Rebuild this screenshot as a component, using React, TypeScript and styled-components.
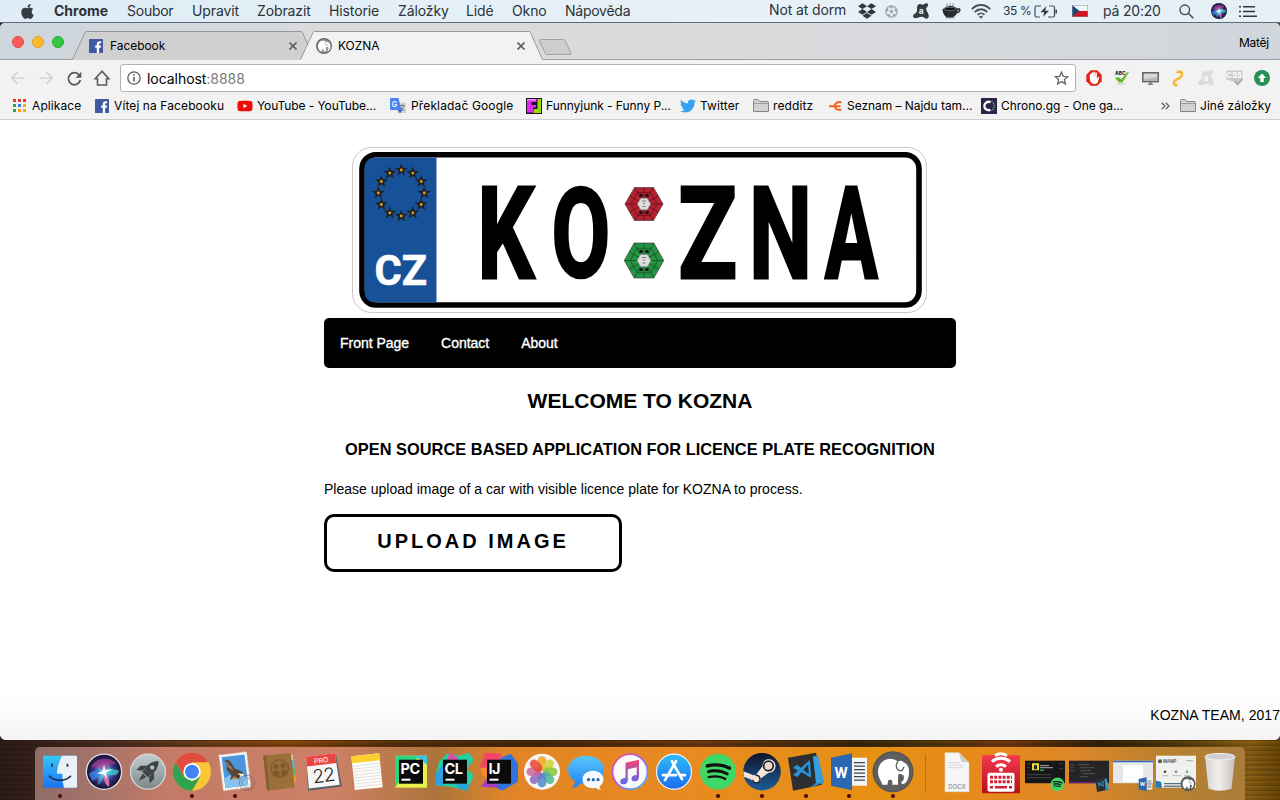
import React from "react";
import styled, { createGlobalStyle } from "styled-components";
import {
  FaApple,
  FaDropbox,
  FaSpotify,
  FaTwitter,
  FaFutbol,
  FaYoutube,
} from "react-icons/fa";

const ui = '"Inter", "Liberation Sans", sans-serif';

const GlobalStyle = createGlobalStyle`
  * { box-sizing: border-box; }
  html, body { margin: 0; padding: 0; overflow: hidden; }
  svg { display: block; flex: none; overflow: visible; }
`;

const Desktop = styled.div`
  width: 1280px;
  height: 800px;
  display: flex;
  flex-direction: column;
  overflow: hidden;
  background:
    repeating-linear-gradient(180deg, rgba(0, 0, 0, 0.2) 0 1px, rgba(0, 0, 0, 0) 1px 3px, rgba(0, 0, 0, 0.1) 3px 5px),
    linear-gradient(90deg, #2d1c17 0, #4a2c20 110px, #6b3d16 210px, #87450d 290px, #55300b 400px, #472708 540px, #6b370f 700px, #3b2608 860px, #50370d 930px, #70360b 1010px, #302208 1100px, #5a3f0b 1190px, #8a5f12 1250px, #6a4609 1280px);
`;

const MenuBar = styled.header`
  height: 23px;
  flex: none;
  display: flex;
  align-items: center;
  background: linear-gradient(90deg, #dfecf5, #e8f1f8 60%, #e4eff6);
  border-bottom: 1px solid #5c6a7c;
  font-family: ${ui};
  color: #2b3238;
`;

const MenuItem = styled.span<{ w: number; bold?: boolean; ls?: number; size?: number; indent?: number; lift?: number }>`
  width: ${(p) => p.w}px;
  flex: none;
  padding-left: ${(p) => p.indent ?? 0}px;
  padding-bottom: ${(p) => p.lift ?? 0}px;
  white-space: nowrap;
  font-size: ${(p) => p.size ?? 14}px;
  line-height: 20px;
  font-weight: ${(p) => (p.bold ? 700 : 400)};
  letter-spacing: ${(p) => p.ls ?? -0.12}px;
`;

const IconCell = styled.span<{ w: number; color?: string }>`
  width: ${(p) => p.w}px;
  flex: none;
  display: flex;
  justify-content: center;
  align-items: center;
  color: ${(p) => p.color ?? "#2f363c"};
`;

const Spacer = styled.span`
  flex: 1;
`;

const Window = styled.section`
  height: 717px;
  flex: none;
  display: flex;
  flex-direction: column;
  overflow: hidden;
  border-radius: 5px 5px 6px 6px;
  background: #fff;
  font-family: ${ui};
`;

const TabStrip = styled.div`
  height: 37px;
  flex: none;
  display: flex;
  align-items: flex-end;
  background: linear-gradient(90deg, #cdd5dd, #d8dadc 300px, #dadbdd 800px, #d0d6dc);
  box-shadow: inset 0 -1px #9b9ea1;
`;

const Lights = styled.div`
  width: 72px;
  height: 37px;
  display: flex;
  gap: 8px;
  padding: 13px 0 0 12px;
`;

const Light = styled.i<{ fill: string; edge: string }>`
  width: 12px;
  height: 12px;
  border-radius: 50%;
  background: ${(p) => p.fill};
  border: 1px solid ${(p) => p.edge};
`;

const TabBox = styled.div<{ active?: boolean }>`
  position: relative;
  z-index: ${(p) => (p.active ? 2 : 1)};
  width: 243px;
  height: 29px;
  margin-left: ${(p) => (p.active ? -15 : 0)}px;
  display: flex;
  align-items: center;
  padding: 0 16px 0 16px;
`;

const TabShape = styled.svg`
  position: absolute;
  left: 0;
  top: 0;
  z-index: -1;
`;

const TabTitle = styled.span`
  flex: 1;
  padding-left: 6px;
  font-size: 12px;
  letter-spacing: -0.05px;
  color: #000;
`;

const NewTab = styled.svg`
  margin: 0 0 5px -4px;
`;

const Profile = styled.span`
  padding: 0 11px 10px 0;
  font-size: 12px;
  line-height: 14px;
  letter-spacing: -0.25px;
`;

const Toolbar = styled.div`
  height: 34px;
  flex: none;
  display: flex;
  align-items: center;
  padding: 2px 4px 0;
  background: #f2f2f2;
`;

const AddressBar = styled.div`
  width: 956px;
  height: 28px;
  margin: 0 4px;
  display: flex;
  align-items: center;
  padding: 0 6px 0 6px;
  background: #fff;
  border: 1px solid #b3b3b3;
  border-radius: 3px;
  font-size: 14px;
`;

const Url = styled.span`
  flex: 1;
  padding-left: 6px;
  letter-spacing: -0.05px;
  i {
    font-style: normal;
    color: #7c7c7c;
  }
`;

const Bookmarks = styled.nav`
  height: 26px;
  flex: none;
  display: flex;
  align-items: center;
  padding: 0 0 2px 12px;
  background: #f2f2f2;
  border-bottom: 1px solid #cfcfcf;
`;

const Bookmark = styled.span<{ w: number; ls?: number; gap?: number }>`
  width: ${(p) => p.w}px;
  flex: none;
  display: flex;
  align-items: center;
  gap: ${(p) => p.gap ?? 4}px;
  white-space: nowrap;
  font-size: 12px;
  line-height: 16px;
  letter-spacing: ${(p) => p.ls ?? 0}px;
  color: #000;
`;

const Page = styled.main`
  flex: 1;
  display: flex;
  flex-direction: column;
  align-items: center;
  justify-content: space-between;
  font-family: "Liberation Sans", Arial, sans-serif;
  color: #000;
  background: linear-gradient(180deg, #fff 575px, #f4f4f4 620px);
`;

const Column = styled.div`
  width: 632px;
  padding-top: 27px;
  display: flex;
  flex-direction: column;
`;

const Plate = styled.svg`
  margin-left: 28px;
`;

const SiteNav = styled.nav`
  height: 50px;
  margin-top: 5px;
  display: flex;
  align-items: center;
  gap: 32px;
  padding: 0 16px;
  border-radius: 5px;
  background: #000;
`;

const NavLink = styled.a`
  color: #fff;
  font-size: 14px;
  letter-spacing: -0.02px;
  -webkit-text-stroke: 0.35px #fff;
`;

const Title = styled.h2`
  margin: 21px 0 0;
  font-size: 21px;
  line-height: 24px;
  text-align: center;
`;

const Subtitle = styled.h3`
  margin: 26px 0 0;
  font-size: 16.38px;
  line-height: 20px;
  letter-spacing: 0.02px;
  text-align: center;
  white-space: nowrap;
`;

const Lead = styled.p`
  margin: 22px 0 0;
  font-size: 14px;
  line-height: 16px;
`;

const UploadButton = styled.button`
  width: 298px;
  height: 58px;
  margin-top: 17px;
  padding: 0 0 3px;
  border: 3px solid #000;
  border-radius: 10px;
  background: #fff;
  color: #000;
  font: bold 20px "Liberation Sans", Arial, sans-serif;
  letter-spacing: 3px;
`;

const Footer = styled.footer`
  align-self: flex-end;
  padding-bottom: 16px;
  font-size: 14px;
  line-height: 17px;
  letter-spacing: 0.05px;
`;

const Dock = styled.footer`
  width: 1210px;
  height: 53px;
  margin: 7px 0 0 35px;
  display: flex;
  padding-left: 3px;
  border-radius: 5px 5px 0 0;
  background: linear-gradient(90deg, #8f6d66 0, #a4736a 60px, #c37a67 130px, #cc8066 300px, #b97849 365px, #aa743c 400px, #e08427 470px, #e88a20 650px, #e69013 850px, #e5891c 960px, #dc8729 1040px, #b9812f 1130px, #a97c3b 1210px);
`;

const Slot = styled.span`
  width: 43.87px;
  height: 53px;
  flex: none;
`;

const Separator = styled.i`
  width: 1px;
  height: 39px;
  margin: 7px 9px 0 10px;
  background: #b5701a;
`;

/* ---------- menu bar glyphs ---------- */

const AvastMark = ({ size, color, letter }: { size: number; color: string; letter: string }) => (
  <svg width={size} height={size} viewBox="0 0 16 16">
    <path
      d="M5.500 1.500c1.600-1 2.700-.2 3.900.2 1.400.4 2.300-1.700 4.300-1.500 1.800.2 1.900 2 .9 3-1.200 1.200-1.600 2.400-1.300 3.600.4 1.900 2.700 4.200 2.500 6.500-.2 2.500-2.800 3-4.300 1.500-1.300-1.300-2.600-1.300-4.500-.8-2 .6-4.400 2-6.200.6C-.6 13.200.2 11.500 1.600 10.800 3.300 10 4 8.700 4 7.200 4 5 3.700 2.700 5.500 1.500z"
      fill={color}
    />
    <text x="8.300" y="11" textAnchor="middle" fontFamily="Inter" fontWeight="700" fontSize="8.500" fill={letter}>a</text>
  </svg>
);

const Coffee = () => (
  <svg width="19" height="16" viewBox="0 0 19 16">
    <path d="M5 3.500c-1.500-1 1-1.700 0-3M8 3.500c-1.500-1 1-1.700 0-3M11 3.500c-1.500-1 1-1.700 0-3" stroke="#6b7278" fill="none" strokeWidth="0.9" />
    <path d="M.5 6.200Q8-.5 15.500 5.500c3-.8 4 1.500 2.500 3.200-.8 1-2 1.400-3.200 1.600C13 14 10.500 15 8 15 4 15 .8 12 .5 6.200z" fill="#262c31" />
    <ellipse cx="8" cy="6" rx="6" ry="1.700" fill="#0f1316" stroke="#878e94" strokeWidth="0.700" />
    <path d="M15.700 7c1.300-.4 1.500.5.9 1.100q-.6.7-1.300.8z" fill="#e6eff6" />
    <path d="M3 14.800h10" stroke="#8b9298" strokeWidth="1" />
  </svg>
);

const Wifi = () => (
  <svg width="20" height="15" viewBox="0 0 20 15" fill="none" stroke="#4a5157" strokeWidth="1.800">
    <path d="M.8 5.200C6-.4 14-.4 19.200 5.200" />
    <path d="M3.700 8C7.300 4.300 12.700 4.300 16.300 8" />
    <path d="M6.600 10.800c2-2 4.800-2 6.800 0" />
    <path d="M10 14.800l-2-2.200q2-1.500 4 0z" fill="#4a5157" stroke="none" />
  </svg>
);

const Battery = () => (
  <svg width="24" height="13" viewBox="0 0 24 13" fill="none" stroke="#454c52" strokeWidth="1.200">
    <path d="M7 1H2.500Q1 1 1 2.500v8Q1 12 2.500 12H6M15 1h4q1.500 0 1.500 1.500v8q0 1.500-1.500 1.500h-5" />
    <path d="M22.200 4.500v4" strokeWidth="1.600" />
    <path d="M12.500 1L6.500 7.300h3.800L9 12l6-6.300h-3.800z" fill="#343b41" stroke="none" />
  </svg>
);

const Flag = () => (
  <svg width="16" height="12" viewBox="0 0 16 12">
    <rect width="16" height="6" fill="#f4f4f4" />
    <rect y="6" width="16" height="6" fill="#d3151c" />
    <path d="M0 0l7.500 6L0 12z" fill="#1d4a7c" />
    <rect x=".25" y=".25" width="15.500" height="11.500" fill="none" stroke="#8b8f96" strokeWidth=".5" />
  </svg>
);

const SearchGlyph = () => (
  <svg width="15" height="15" viewBox="0 0 15 15" fill="none" stroke="#434a50" strokeWidth="1.300">
    <circle cx="5.800" cy="5.800" r="4.800" />
    <path d="M9.300 9.300l5 5" strokeWidth="1.500" />
  </svg>
);

const ListGlyph = () => (
  <svg width="18" height="11" viewBox="0 0 18 11" fill="#2f363c">
    <path d="M0 0h2v1.500H0zM0 4.700h2v1.500H0zM0 9.400h2v1.500H0zM4 0h12v1.600H4zM4 4.700h12v1.600H4zM4 9.400h14v1.600H4z" />
  </svg>
);

const SiriArt = ({ r }: { r: number }) => (
  <g>
    <defs>
      <radialGradient id={`siri${r}`} cx=".5" cy=".5" r=".5">
        <stop offset="0" stopColor="#e8ffff" />
        <stop offset=".25" stopColor="#55b8d8" />
        <stop offset=".6" stopColor="#3a3585" />
        <stop offset="1" stopColor="#14102e" />
      </radialGradient>
    </defs>
    <circle r={r} fill={`url(#siri${r})`} />
    <g transform={`scale(${r / 17})`}>
      <path d="M-13-4C-10-14 6-16 12-8 6-8 2-4 0 1-3-4-8-5-13-4z" fill="#c93a95" opacity=".6" />
      <path d="M-15 2c5-4 11-4 15-1C-3 4-8 8-12 9z" fill="#3a8bf0" opacity=".75" />
      <path d="M0 0c5-4 10-3 15-1-1 6-8 6-15 1z" fill="#3fd6d0" opacity=".75" />
      <path d="M0 0c4 4 6 9 5 15-4-1-6-9-5-15z" fill="#f277a5" opacity=".9" />
      <path d="M0 0c-5 4-7 8-6 13 4-2 6-7 6-13z" fill="#5be0ea" opacity=".45" />
      <path d="M-7 2L-1.500-1 0-7 1.500-1.500 9-3 2 1l1 6-3.500-4.500z" fill="#fff" opacity=".9" />
    </g>
  </g>
);

/* ---------- browser glyphs ---------- */

const Elephant = ({ line }: { line: string }) => (
  <g>
    <path
      d="M-10.700 13C-11.500 9-15 6-15 0-15-7-10-13-3-13 0-13 3-12 5-10 7-11.500 9-11 10.500-9.500 14-8.500 16.500-4 16 0 16 6 14 12 9.500 12.500L8 10.500C10.500 9 11.500 7 10.500 3.500 9 2.500 7.500 2.500 5.500 2 5 6 5 9 5 13H-.7V9Q-3 7-5 9L-5.500 13z"
      fill="#fff"
    />
    <path d="M5-10C2-7 3-2 7-1 9-.5 10-2 11-5" fill="none" stroke={line} strokeWidth="1.300" />
  </g>
);

const Mamp = () => (
  <svg width="16" height="16" viewBox="-20 -20 40 40">
    <circle r="18.500" fill="#8d8d8d" stroke="#6a6a6a" strokeWidth="3" />
    <Elephant line="#8d8d8d" />
  </svg>
);

const FacebookIcon = () => (
  <svg width="16" height="16" viewBox="0 0 16 16">
    <rect x="1" y="1" width="14" height="14" rx=".5" fill="#4059a0" />
    <path d="M8.800 15V9.700H7.200V7.600h1.600V6.200C8.800 4.300 9.900 3.300 11.600 3.300h1.600v2h-1.100c-.8 0-1 .4-1 1v1.300h2l-.3 2.100h-1.700V15z" fill="#fff" />
  </svg>
);

const CloseX = () => (
  <svg width="8" height="8" viewBox="0 0 8 8" stroke="#5a5a5a" strokeWidth="1.700">
    <path d="M.5.5l7 7M7.500.5l-7 7" />
  </svg>
);

const Arrow = ({ back }: { back?: boolean }) => (
  <svg width="14" height="14" viewBox="0 0 14 14" fill="none" stroke="#d2d2d2" strokeWidth="1.700">
    <path d={back ? "M13.500 7H1.500M6.500 1.200L.9 7l5.600 5.800" : "M.5 7h12M7.500 1.200L13.100 7l-5.600 5.800"} />
  </svg>
);

const Reload = () => (
  <svg width="15" height="15" viewBox="0 0 15 15" fill="none" stroke="#5a5a5a" strokeWidth="1.800">
    <path d="M12.300 4.200A6 6 0 1 0 13.300 9" />
    <path d="M14.300.8v6H8.500z" fill="#5a5a5a" stroke="none" />
  </svg>
);

const HomeGlyph = () => (
  <svg width="16" height="16" viewBox="0 0 16 16" fill="none" stroke="#5a5a5a" strokeWidth="1.600">
    <path d="M8 1.200L1.200 8.800h2.300V15h9V8.800h2.300z" />
  </svg>
);

const InfoGlyph = () => (
  <svg width="14" height="14" viewBox="0 0 14 14" fill="none" stroke="#5a5a5a" strokeWidth="1.300">
    <circle cx="7" cy="7" r="6.200" />
    <path d="M7 6v4.500M7 3.300v1.500" strokeWidth="1.600" />
  </svg>
);

const StarGlyph = () => (
  <svg width="15" height="14" viewBox="0 0 15 14" fill="none" stroke="#666" strokeWidth="1.300">
    <path d="M7.500 1.200l1.800 4.100 4.400.4-3.300 2.900 1 4.300-3.900-2.300-3.900 2.300 1-4.300L1.300 5.700l4.400-.4z" />
  </svg>
);

const AdBlock = () => (
  <svg width="16" height="16" viewBox="0 0 16 16">
    <path d="M4.800.3h6.400l4.500 4.500v6.400l-4.500 4.500H4.800L.3 11.200V4.800z" fill="#e62117" />
    <path d="M3.800 8.500V4.300q.8-1 1.400 0V7.500L5.500 2.700q.9-1 1.500 0V7l.3-5q1-.9 1.500 0l.1 5 .5-4.500q1-.8 1.500.2l-.1 6.300 1.300-2q1.200-.5 1.200.5L11.500 13q-3 2.200-6 0Q3.800 11.500 3.800 8.500z" fill="#fff" />
  </svg>
);

const SpellCheck = () => (
  <svg width="16" height="16" viewBox="0 0 16 16">
    <text x="1" y="4.500" fontSize="4.800" fontWeight="800" fontFamily="Inter" fill="#222">ABC</text>
    <path d="M1 8l3.500-1 2.500 2.500L14 1.500 15 2 8.500 12.500H5z" fill="#65b82e" />
    <path d="M2.500 13h10L9 15H4z" fill="#d3d8d0" />
  </svg>
);

const Monitor = () => (
  <svg width="17" height="13" viewBox="0 0 17 13">
    <rect x=".7" y=".7" width="15.600" height="9" fill="#b9b9b9" stroke="#666" strokeWidth="1.400" />
    <path d="M2 2h13v3L2 7z" fill="#d8d8d8" />
    <path d="M7.500 10h2v1.800H11V13H6v-1.200h1.500z" fill="#777" />
  </svg>
);

const HookGlyph = () => (
  <svg width="12" height="17" viewBox="0 0 12 17" fill="none" stroke="#f7b52d" strokeWidth="2.500">
    <path d="M5 3.200C6.500.5 10.800 1.500 9.900 5 9.300 7 7.200 7.300 6.800 9.500" />
    <path d="M6 7.800C5.500 9.500 4 9.800 2.600 11.200.8 13.200 2.800 16.300 5.500 14.500" />
  </svg>
);

const CssBadge = () => (
  <svg width="17" height="16" viewBox="0 0 17 16">
    <path d="M.5.500h16v9L12 15.500 8.500 12 .5 9.500z" fill="#c9c9c9" />
    <text x="8.300" y="8.300" textAnchor="middle" fontSize="7.500" fontWeight="700" fontFamily="Inter" fill="#fff">CSS</text>
    <path d="M8.500 11l3 3.500 5-5.500" stroke="#a8a8a8" strokeWidth="1.800" fill="none" />
  </svg>
);

const UpBadge = () => (
  <svg width="16" height="16" viewBox="0 0 16 16">
    <circle cx="8" cy="8" r="8" fill="#279055" />
    <path d="M8 3.500l4.200 4.500H9.800v4H6.200V8H3.800z" fill="#fff" />
  </svg>
);

const appColors = ["#e8372c", "#e8372c", "#e8372c", "#2fa04e", "#2f80e8", "#f4a81c", "#2fa04e", "#f4a81c", "#f4a81c"];
const AppsGrid = () => (
  <svg width="15" height="13" viewBox="-1 0 15 13">
    {appColors.map((c, i) => (
      <rect key={i} x={(i % 3) * 5} y={Math.floor(i / 3) * 5} width="3" height="3" fill={c} />
    ))}
  </svg>
);

const Translate = () => (
  <svg width="16" height="16" viewBox="0 0 16 16">
    <rect x="7" y="4.500" width="9" height="10.500" fill="#d3d3d3" />
    <path d="M9.500 7.500h5M12 6.500v1M14 8q-1 3-4 4.500M10.500 9q1 2.500 3.500 3.500" stroke="#777" fill="none" />
    <path d="M1 0h7.500l3 12H1q-1 0-1-1V1q0-1 1-1z" fill="#4a86ee" />
    <path d="M8 12h4l-2 3.500z" fill="#2d5fc4" />
    <text x="1.800" y="8.500" fontSize="7" fontWeight="600" fontFamily="Inter" fill="#fff">G</text>
  </svg>
);

const Funny = () => (
  <svg width="16" height="16" viewBox="0 0 16 16">
    <rect width="16" height="16" fill="#231024" />
    <path d="M1 1h9.500v3H5.500v3H10v2.500H7V14.500H1z" fill="#e02bf0" />
    <path d="M1 1h9v1.500H1z" fill="#f08af5" />
    <path d="M11.500 1h3.500v14H7.500v-4h4z" fill="#93dd00" />
  </svg>
);

const Folder = () => (
  <svg width="16" height="13" viewBox="0 0 16 13" stroke="#868686" fill="#d2d2d2">
    <path d="M.5 12.500V1.500q0-1 1-1h3.500l1.500 2h8q1 0 1 1v9z" />
    <path d="M.5 4.500h15" stroke="#9a9a9a" />
  </svg>
);

const SeznamMark = () => (
  <svg width="15" height="10" viewBox="0 0 15 10" fill="none" stroke="#f26522" strokeWidth="2">
    <path d="M13.500 1.300C10 .5 7.500 1.800 6.500 5c1 2.800 3.500 4.500 7 3.500" />
    <path d="M1 5.200h11.500" strokeWidth="2" />
  </svg>
);

const ChronoMark = () => (
  <svg width="16" height="16" viewBox="0 0 16 16">
    <rect width="16" height="16" fill="#2e2347" />
    <path d="M9.500 4.300A4.200 4.200 0 1 0 9.500 11.700" stroke="#fff" strokeWidth="2.300" fill="none" />
    <path d="M10.500 3.200a5.600 5.600 0 0 1 0 9.600" stroke="#53a79f" strokeWidth="1.600" strokeDasharray="1.200 1" fill="none" />
  </svg>
);

/* ---------- licence plate logo ---------- */

const starPoints = (cx: number, cy: number, r: number) =>
  Array.from({ length: 10 }, (_, i) => {
    const a = (Math.PI / 5) * i - Math.PI / 2;
    const q = i % 2 ? r * 0.42 : r;
    return `${(cx + q * Math.cos(a)).toFixed(2)},${(cy + q * Math.sin(a)).toFixed(2)}`;
  }).join(" ");

const Seal = ({ cy, w, h, fill, line }: { cy: number; w: number; h: number; fill: string; line: string }) => {
  const hex = (s: number) => `M${-w * s} 0L${-w * 0.5 * s} ${-h * s}H${w * 0.5 * s}L${w * s} 0L${w * 0.5 * s} ${h * s}H${-w * 0.5 * s}z`;
  return (
    <g transform={`translate(644 ${cy})`} stroke={line} strokeWidth=".7">
      <path d={hex(1)} fill={fill} stroke="#444" />
      <path d={hex(0.7)} fill="none" />
      <path d={`M${-w} 0H${w}M${-w / 2} ${-h}L${w / 2} ${h}M${w / 2} ${-h}L${-w / 2} ${h}M0 ${-h}V${h}M${-w * 0.75} ${-h / 2}L${w * 0.75} ${h / 2}M${w * 0.75} ${-h / 2}L${-w * 0.75} ${h / 2}`} />
      <path d={hex(0.35)} fill="#dedede" stroke="#888" />
      <path d="M-2-3h4M-1-.500h2M-1.500 2.500h3" stroke="#777" strokeWidth="1" />
      <g fill="#111" stroke="none">
        <circle cx="-3" cy={-h * 0.52} r="1.700" />
        <circle cx="3" cy={-h * 0.52} r="1.700" />
        <circle cx="-3" cy={h * 0.52} r="1.700" />
        <circle cx="3" cy={h * 0.52} r="1.700" />
      </g>
    </g>
  );
};

const plateLetters = [
  { ch: "K", x: 477.3, y: 277.7, sx: 0.7, sy: 1 },
  { ch: "O", x: 551.6, y: 276.6, sx: 0.663, sy: 0.97 },
  { ch: "Z", x: 678.2, y: 277.7, sx: 0.755, sy: 1 },
  { ch: "N", x: 748.9, y: 277.7, sx: 0.695, sy: 1 },
  { ch: "A", x: 824.8, y: 277.7, sx: 0.615, sy: 1 },
];

const PlateLogo = () => (
  <Plate width="575" height="166" viewBox="352 147 575 166">
    <rect x="352.500" y="147.500" width="574" height="165" rx="19" fill="#fff" stroke="#c8c8c8" />
    <rect x="362" y="154.700" width="557" height="150.300" rx="14" fill="#fff" stroke="#000" strokeWidth="5.600" />
    <path d="M436.500 157.500V302.300H376q-11.500 0-11.500-11.500V169q0-11.500 11.500-11.500z" fill="#175197" />
    {Array.from({ length: 12 }, (_, i) => {
      const a = (Math.PI / 6) * i;
      const cx = 401.3 + 23 * Math.cos(a);
      const cy = 193 + 23 * Math.sin(a);
      return (
        <g key={i}>
          <polygon points={starPoints(cx, cy, 6.8)} fill="#1f2226" />
          <circle cx={cx} cy={cy} r="1.400" fill="#dba21c" />
        </g>
      );
    })}
    <text x="374.500" y="284.500" fontFamily="Roboto" fontWeight="700" fontSize="43" fill="#fff" stroke="#fff" strokeWidth=".6" textLength="52.500" lengthAdjust="spacingAndGlyphs">CZ</text>
    {plateLetters.map((l) => (
      <text key={l.ch} transform={`translate(${l.x} ${l.y}) scale(${l.sx} ${l.sy})`} fontFamily="Roboto" fontWeight="700" fontSize="128.500" fill="#000" stroke="#000" strokeWidth="2.800">
        {l.ch}
      </text>
    ))}
    <Seal cy={204} w={19} h={16.500} fill="#b5202f" line="#5d0f1a" />
    <Seal cy={260.500} w={19.700} h={17.500} fill="#259343" line="#0e4a1f" />
  </Plate>
);

/* ---------- dock icons: each is drawn around its own centre ---------- */

const DockIcon = ({ children, running }: { children: React.ReactNode; running?: boolean }) => (
  <Slot>
    <svg width="43.840" height="53" viewBox="0 0 43.840 53">
      <g transform="translate(22 24.700)">{children}</g>
      {running && <circle cx="22" cy="49" r="2.100" fill="#4e0c08" />}
    </svg>
  </Slot>
);

const Grad = ({ id, a, b }: { id: string; a: string; b: string }) => (
  <linearGradient id={id} x1="0" y1="0" x2="0" y2="1">
    <stop offset="0" stopColor={a} />
    <stop offset="1" stopColor={b} />
  </linearGradient>
);

const Finder = () => (
  <g>
    <defs><Grad id="fn" a="#35c8f5" b="#1d72f2" /></defs>
    <rect x="-17" y="-16" width="34" height="32" rx="1" fill="url(#fn)" />
    <path d="M2-16C-1-10-3-4-3 2H2.500q-.5 7 1.500 14H16q1 0 1-1v-30q0-1-1-1z" fill="#eaf1f8" />
    <path d="M-8-8v3M7.500-8v3" stroke="#1a2b48" strokeWidth="1.700" />
    <path d="M-11 4c5 6 17 6 22 0" stroke="#1a2b48" strokeWidth="1.500" fill="none" />
  </g>
);

const Rocket = () => (
  <g>
    <defs><Grad id="rk" a="#c3ccd0" b="#7e868a" /></defs>
    <circle r="17.500" fill="url(#rk)" stroke="#d5dadc" strokeWidth="1.200" />
    <g transform="rotate(45)" fill="#3e4347">
      <path d="M0-15c4 4 5.500 9 4.500 15H-4.500C-5.500-6-4-11 0-15z" />
      <path d="M-4.500-4l-5 5v6l5-4zM4.500-4l5 5v6l-5-4zM-2.500 5h5L0 13z" />
      <path d="M-4 0h8v4h-8z" />
      <circle cy="-6" r="2.200" fill="#b5bdc1" />
    </g>
  </g>
);

const ChromeArt = () => (
  <g>
    <circle r="19" fill="#fbc637" />
    <path d="M-16.500-9.500A19 19 0 0 1 16.500-9.500H0L-8.200 4.800z" fill="#e14b41" />
    <path d="M-16.500-9.500A19 19 0 0 0 0 19L8.300 4.700 0 9.500-8.200 4.800z" fill="#31a152" />
    <circle r="8.700" fill="#fff" />
    <circle r="7" fill="#4284f3" />
  </g>
);

const MailArt = () => (
  <g>
    <g transform="rotate(-7)">
      <rect x="-13.500" y="-18" width="27" height="35" fill="#f5f5f5" stroke="#f5f5f5" strokeDasharray="1.500 1" strokeWidth="1.500" />
      <rect x="-11.500" y="-16" width="23" height="31" fill="#4b96dd" />
      <path d="M-11.500 5q12-5 23 2v8h-23z" fill="#88c2ee" />
      <path d="M-9-12C-6-14-4-12-2-8L0-3C3-2 5-1 7 1L10 6 5 4 3 8-1 5-6 8-4 3-8-3C-8-6-6-7-9-12z" fill="#5a4534" />
      <path d="M-8-11L-3-4M-7-7l5 5" stroke="#a08a74" strokeWidth="1" />
      <path d="M2 2l6 1 1 2-3 .5z" fill="#f4eee2" />
      <path d="M-2 4l4 4-5-1z" fill="#c98a2b" />
    </g>
    <circle cx="12" cy="11" r="7.500" fill="none" stroke="#5d6068" opacity=".6" />
    <circle cx="12" cy="11" r="5" fill="none" stroke="#5d6068" opacity=".5" />
  </g>
);

const Contacts = () => (
  <g transform="rotate(-6)">
    <path d="M13-16h2v28h-2z" fill="#f5f5f5" />
    <path d="M13-10h3v8h-3z" fill="#54b4e8" />
    <path d="M13-2h3v7h-3z" fill="#53bf54" />
    <path d="M13 5h3v7h-3z" fill="#f59b22" />
    <rect x="-14" y="-17.500" width="28" height="35" rx="1.500" fill="#9b6f3a" />
    <path d="M-14-17.500h3v35h-3z" fill="#86602f" />
    <circle cx="1" cy="-3" r="8.700" fill="none" stroke="#80592b" strokeWidth="1.200" />
    <g fill="#80592b">
      <circle cx="-2.600" cy="-5.500" r="2.700" />
      <circle cx="4.600" cy="-5.500" r="2.700" />
      <path d="M-7 1.500q1-3 4.400-3.200Q.3-1.500.5 1.500L0 4.500Q-4 5-7 1.500zM9 1.500Q8-1.500 4.600-1.700 1.700-1.500 1.500 1.500L2 4.500Q6 5 9 1.500z" />
    </g>
  </g>
);

const Calendar = () => (
  <g transform="rotate(-7)">
    <path d="M-15-15L-17 17H17L15-15z" fill="#5d6064" />
    <path d="M-15-17h29l1 32h-31z" fill="#f7f7f7" />
    <path d="M-15-17h29l.4 10h-29.600z" fill="#e9453f" />
    <text y="-9" x="-.5" textAnchor="middle" fontFamily="Inter" fontSize="7" fill="#fff">PRO</text>
    <text y="10.500" textAnchor="middle" fontFamily="Inter" fontWeight="300" fontSize="19" letterSpacing="-.8" fill="#1b1b1b">22</text>
  </g>
);

const Notes = () => (
  <g transform="rotate(-6)">
    <rect x="-14" y="-17" width="28" height="34" fill="#fcfcf9" />
    <path d="M-14-17h28v7h-28z" fill="#fbcf2d" />
    <path d="M-14-7h28M-14-4h28M-14-1h28M-14 2h28M-14 5h28M-14 8h28M-14 11h28M-14 14h28" stroke="#dcdcd8" strokeWidth=".8" />
  </g>
);

const JetBrains = ({ label, art }: { label: string; art: React.ReactNode }) => (
  <g>
    {art}
    <rect x="-12" y="-12" width="24" height="24" fill="#0b0b0b" />
    <text x="-10.500" y="2" fontFamily="Inter" fontWeight="700" fontSize="14.500" letterSpacing="-.5" fill="#fff">{label}</text>
    <path d="M-9.500 7h9v2h-9z" fill="#fff" />
  </g>
);

const PyArt = (
  <g>
    <rect x="-16" y="-16" width="32" height="32" fill="#e6f14a" />
    <path d="M-16-16H8L-12 10l-4 6z" fill="#2bd681" />
    <path d="M4-16h12v9z" fill="#38c5e8" />
  </g>
);
const ClArt = (
  <g>
    <path d="M-8-18L4-16 14-19 19-12 12-3 19 4 12 19-4 15-19 14-19 2-16-10z" fill="#25cfa0" />
    <path d="M-5-19L3-14 3-10-10-9z" fill="#d94fa5" />
    <path d="M-19 2l7-10v22l-7-1z" fill="#2f9fe0" />
    <path d="M0 12h14l-2 7-8-2z" fill="#23a7db" />
  </g>
);
const IjArt = (
  <g>
    <path d="M-14-19L2-18 0 0-19-4z" fill="#f4436c" />
    <path d="M2-14L12-18 19-8V10L3 19-6 14z" fill="#3072e0" />
    <path d="M-18-4h8v12l-8-6z" fill="#f78c2a" />
    <path d="M-12 6h10v10l-16-1z" fill="#a142c4" />
  </g>
);

const petals = ["#f5a623", "#d6d13a", "#8cc63f", "#4db592", "#4f8fd0", "#8d6bc0", "#c96a9c", "#ea4a3b"];
const Photos = () => (
  <g>
    <circle r="18" fill="#f8f6f4" />
    {petals.map((c, i) => (
      <rect key={c} x="-4.300" y="-15.500" width="8.600" height="14.500" rx="4.300" fill={c} opacity=".88" transform={`rotate(${i * 45})`} />
    ))}
  </g>
);

const Messages = () => (
  <g>
    <defs><Grad id="ms" a="#5cc6fa" b="#1e83f3" /></defs>
    <path d="M0-16c10 0 18 6 18 14S10 12 0 12l-5-.5q-4 4.500-9 4.500 3-3 3-6.500-7-4-7-11.500C-18-10-10-16 0-16z" fill="url(#ms)" />
    <path d="M7-1c6 0 10.500 4 10.500 8.700 0 3-1.500 5-4 6.800q0 2 1.500 3.500-3 0-5-2L7 16.500c-6 0-10.500-4-10.500-8.800S1-1 7-1z" fill="#f7fbff" />
    <g fill="#2465a8"><circle cx="2.500" cy="8" r="1.600" /><circle cx="7.300" cy="8" r="1.600" /><circle cx="12" cy="8" r="1.600" /></g>
  </g>
);

const Music = () => (
  <g>
    <defs>
      <linearGradient id="itr" x1="0" y1="0" x2="1" y2="1"><stop offset="0" stopColor="#fb4b7c" /><stop offset=".5" stopColor="#a65df0" /><stop offset="1" stopColor="#34c9f5" /></linearGradient>
      <Grad id="itn" a="#f7436c" b="#5a6df2" />
    </defs>
    <circle r="17.500" fill="#fafafa" stroke="url(#itr)" strokeWidth="1.800" />
    <path d="M-4.500-9L9-12V5.500c0 5-7.500 5.500-7.500 1.500 0-3 3-3.500 5.300-4V-4.500L-2.200-2.500V8.500c0 5-7.500 5.500-7.500 1.500 0-3 3-3.500 5.200-4z" fill="url(#itn)" />
  </g>
);

const AppStore = () => (
  <g>
    <defs><Grad id="as" a="#2cbdf8" b="#1d6cf1" /></defs>
    <circle r="17.500" fill="url(#as)" stroke="#eef4fa" strokeWidth="1.200" />
    <g stroke="#fff" strokeWidth="2.700" strokeLinecap="round">
      <path d="M2-10.500L-7.500 6M-2-10.500L8 7.500M-11 3.500H2M6 3.500h5M-8.500 7.500l-.5.800" />
    </g>
  </g>
);

const SpotifyArt = () => (
  <g>
    <circle r="17" fill="#111" />
    <g transform="translate(-18.500 -18.500)"><FaSpotify size={37} color="#3fd765" /></g>
  </g>
);

const SteamArt = () => (
  <g>
    <defs><Grad id="st" a="#10142c" b="#1b5e97" /></defs>
    <circle r="18.800" fill="url(#st)" />
    <path d="M-18.700-.5L-8.500 3.500-6 3 .5-5.500C.5-10 3-12.500 6.500-12.500 11-12.500 13.500-9.500 13.500-6 13.500-1.500 10.500 1 6.500 1L-1 6.500C-1.500 13-9.500 13-10.500 8L-18 5z" fill="#f6e4d6" />
    <circle cx="6.500" cy="-5.800" r="4.800" fill="#f0d9c6" stroke="#17203b" strokeWidth="1.700" />
    <path d="M-9.500 8.200a3.800 3.800 0 1 0 3-4.500" stroke="#17203b" fill="none" strokeWidth="1.500" />
  </g>
);

const CodeArt = () => (
  <g>
    <path d="M-18-14L10-19 16 13-13 19z" fill="#2d2e30" />
    <path d="M7-15.500l5 0L18 11 3 16l7-5z" fill="#2489ca" />
    <path d="M7-15.500L10 11l8 0L12-15.500z" fill="#39a5e3" opacity=".8" />
    <path d="M1-8L-9 4l-2-1L3-9.500 4 4-11-4l2-1.500L3 4" stroke="#2a93d5" strokeWidth="2.200" fill="none" />
  </g>
);

const WordArt = () => (
  <g>
    <path d="M3-14h15v28H3z" fill="#f6f6f6" />
    <path d="M5-9h11M5-5.500h11M5-2h11M5 1.500h11M5 5h11M5 8.500h11" stroke="#3a4654" strokeWidth="1.300" />
    <path d="M-18-14L3-18.500v37L-18 14z" fill="#2c66b3" />
    <text x="-8" y="6" textAnchor="middle" fontFamily="Roboto" fontWeight="700" fontSize="15" fill="#fff">W</text>
  </g>
);

const MampArt = ({ r }: { r: number }) => (
  <g transform={`scale(${r / 20.5})`}>
    <circle r="20.500" fill="#555" />
    <circle r="19" fill="#5f5f5f" />
    <Elephant line="#5f5f5f" />
  </g>
);

const Docx = () => (
  <g>
    <path d="M-12-19H2L12-9v29h-24z" fill="#f6f6f6" stroke="#ddd" strokeWidth=".6" />
    <path d="M2-19L12-9 4-10z" fill="#cfcfcf" />
    <path d="M-9-9H3M-9-6.500H6M-9-4H6" stroke="#d5d5d8" strokeWidth="1" />
    <text y="17.500" textAnchor="middle" fontFamily="Inter" fontSize="6" fill="#777">DOCX</text>
  </g>
);

const RemoteArt = () => (
  <g>
    <defs><Grad id="rm" a="#f43a50" b="#b50e1b" /></defs>
    <rect x="-19" y="-16.500" width="38" height="38" fill="url(#rm)" />
    <rect x="-13.500" y="1" width="27" height="19" rx="2" fill="#fff" />
    <path d="M-11 5.500h22M-11 10h22" stroke="#d11f31" strokeWidth="3" strokeDasharray="3 1.200" />
    <path d="M-11 15.500h3M-6 15.500H6M8 15.500h3" stroke="#d11f31" strokeWidth="2.500" />
    <g fill="none" stroke="#fff" strokeWidth="3">
      <path d="M-9-10c5-4.500 13-4.500 18 0M-5-5c3-2.500 7-2.500 10 0" />
      <path d="M-6-16c4-2.500 8-2.500 12 0" />
    </g>
    <circle cy="-2" r="2" fill="#fff" />
  </g>
);

const SpotifyWin = () => (
  <g>
    <rect x="-20" y="-11" width="40" height="22.500" fill="#171717" />
    <rect x="-13" y="-8.500" width="7" height="7" fill="#e8d935" />
    <rect x="-11" y="-6.500" width="3" height="4" fill="#222" />
    <path d="M-5-6h9M-5-4h13" stroke="#bbb" strokeWidth=".9" />
    <path d="M-5-1.500h4" stroke="#35c558" strokeWidth="1.300" />
    <path d="M-18 3h24M-18 6h24M14-8h4M14-3h4M-18-8h3M-18-4h3" stroke="#4a4a4a" strokeWidth=".9" />
    <circle cx="12.500" cy="12.500" r="6" fill="#111" />
    <g transform="translate(5.500 5.500)"><FaSpotify size={14} color="#3fd765" /></g>
  </g>
);

const CodeWin = () => (
  <g>
    <rect x="-20" y="-11" width="40" height="22.500" fill="#252527" />
    <path d="M-20 10.800h27" stroke="#68217a" strokeWidth="1.500" />
    <path d="M-11-7H0M-9-4h14M-9-1H2M-7 2H6M-9 5h8" stroke="#655d56" strokeWidth=".8" />
    <path d="M-19-7h5M-19-4h4M-19-1h5" stroke="#55585c" strokeWidth=".8" />
    <g transform="translate(13 13) scale(.38)"><CodeArt /></g>
  </g>
);

const WordWin = () => (
  <g>
    <rect x="-20" y="-11" width="40" height="22.500" fill="#e6e7ea" />
    <path d="M-20-11h40v1.500h-40z" fill="#2f67b5" />
    <rect x="-10" y="-7" width="20" height="17.500" fill="#fff" />
    <g transform="translate(12.500 12.500) scale(.38)"><WordArt /></g>
  </g>
);

const MampWin = () => (
  <g>
    <rect x="-20" y="-16" width="40" height="32" fill="#f0f0ee" />
    <circle cx="-16" cy="-10.500" r="2" fill="#555" />
    <text x="-13" y="-8.800" fontFamily="Inter" fontWeight="600" fontSize="4.200" fill="#555">MAMP</text>
    <path d="M10-11h7" stroke="#aaa" />
    <circle cx="-11" cy="0" r="1.300" fill="#444" />
    <circle cx="0" cy="0" r="1.300" fill="#888" />
    <circle cx="11" cy="0" r="1.300" fill="#5fb956" />
    <path d="M-14 4h6M-4 4h9M8 4h6" stroke="#aaa" strokeWidth=".8" />
    <path d="M-20 9l5 1 1 6h-6z" fill="#2379b8" />
    <path d="M-12 12H5M-12 14.500H5" stroke="#29506f" />
    <g transform="translate(12 12)"><MampArt r={7.5} /></g>
  </g>
);

const Trash = () => (
  <g>
    <defs>
      <linearGradient id="tr"><stop offset="0" stopColor="#d8d8d8" /><stop offset=".45" stopColor="#f4f4f4" /><stop offset="1" stopColor="#c4c4c4" /></linearGradient>
    </defs>
    <path d="M-15-15L-11.500 17Q0 21 11.500 17L15-15z" fill="url(#tr)" opacity=".95" />
    <ellipse cy="-15" rx="15" ry="3.300" fill="#cfcfcf" stroke="#f3f3f3" strokeWidth="1" />
  </g>
);

const TabOutline = ({ fill }: { fill: string }) => (
  <TabShape width="243" height="29" viewBox="0 0 243 29">
    <path d="M.5 29L13 1.500q.5-1 1.500-1H229q1 0 1.500 1L243 29z" fill={fill} />
    <path d="M.5 28.500L13 1.500q.5-1 1.500-1H229q1 0 1.500 1L242.500 28.500" fill="none" stroke="#95989b" />
  </TabShape>
);

export default function App() {
  return (
    <Desktop>
      <GlobalStyle />
      <MenuBar>
        <IconCell w={54}><FaApple size={17} color="#343b41" /></IconCell>
        <MenuItem w={73} bold ls={0}>Chrome</MenuItem>
        <MenuItem w={65} ls={-0.25}>Soubor</MenuItem>
        <MenuItem w={65}>Upravit</MenuItem>
        <MenuItem w={72}>Zobrazit</MenuItem>
        <MenuItem w={69}>Historie</MenuItem>
        <MenuItem w={68}>Záložky</MenuItem>
        <MenuItem w={46}>Lidé</MenuItem>
        <MenuItem w={53}>Okno</MenuItem>
        <MenuItem w={204} ls={-0.25}>Nápověda</MenuItem>
        <MenuItem w={88} lift={2}>Not at dorm</MenuItem>
        <IconCell w={20}><FaDropbox size={18} /></IconCell>
        <IconCell w={28} color="#a3a9ae"><FaFutbol size={13} /></IconCell>
        <IconCell w={32}><AvastMark size={16} color="#333a40" letter="#e5eff6" /></IconCell>
        <IconCell w={28}><Coffee /></IconCell>
        <IconCell w={32}><Wifi /></IconCell>
        <MenuItem w={36} indent={6} size={12} ls={-0.35}>35 %</MenuItem>
        <IconCell w={26}><Battery /></IconCell>
        <IconCell w={42}><Flag /></IconCell>
        <MenuItem w={69} indent={2} ls={-0.2}>pá 20:20</MenuItem>
        <IconCell w={32}><SearchGlyph /></IconCell>
        <IconCell w={33}>
          <svg width="16" height="16" viewBox="-8 -8 16 16"><SiriArt r={8} /></svg>
        </IconCell>
        <IconCell w={26}><ListGlyph /></IconCell>
      </MenuBar>

      <Window>
        <TabStrip>
          <Lights>
            <Light fill="#fc5b57" edge="#e24b47" />
            <Light fill="#fdbc2e" edge="#e0a028" />
            <Light fill="#34c840" edge="#27ab35" />
          </Lights>
          <TabBox>
            <TabOutline fill="#d0d0d0" />
            <FacebookIcon />
            <TabTitle>Facebook</TabTitle>
            <IconCell w={12}><CloseX /></IconCell>
          </TabBox>
          <TabBox active>
            <TabOutline fill="#f2f2f2" />
            <Mamp />
            <TabTitle>KOZNA</TabTitle>
            <IconCell w={12}><CloseX /></IconCell>
          </TabBox>
          <NewTab width="33" height="16" viewBox="0 0 33 16">
            <path d="M1 .5h23.500q1.200 0 1.700 1L32 14q.5 1.500-1 1.500H8q-1.200 0-1.700-1L.4 2Q0 .5 1 .5z" fill="#cdcecf" stroke="#9ea1a4" />
          </NewTab>
          <Spacer />
          <Profile>Matěj</Profile>
        </TabStrip>

        <Toolbar>
          <IconCell w={28}><Arrow back /></IconCell>
          <IconCell w={28}><Arrow /></IconCell>
          <IconCell w={28}><Reload /></IconCell>
          <IconCell w={28}><HomeGlyph /></IconCell>
          <AddressBar>
            <InfoGlyph />
            <Url>localhost<i>:8888</i></Url>
            <StarGlyph />
          </AddressBar>
          <IconCell w={28}><AdBlock /></IconCell>
          <IconCell w={28}><SpellCheck /></IconCell>
          <IconCell w={28}><Monitor /></IconCell>
          <IconCell w={28}><HookGlyph /></IconCell>
          <IconCell w={28}><AvastMark size={16} color="#dcdcdc" letter="#fafafa" /></IconCell>
          <IconCell w={28}><CssBadge /></IconCell>
          <IconCell w={28}><UpBadge /></IconCell>
        </Toolbar>

        <Bookmarks>
          <Bookmark w={82} gap={5} ls={0.1}><AppsGrid />Aplikace</Bookmark>
          <Bookmark w={143} ls={0.1}><FacebookIcon />Vítej na Facebooku</Bookmark>
          <Bookmark w={153} ls={-0.1}><FaYoutube size={16} color="#f00b0b" />YouTube - YouTube...</Bookmark>
          <Bookmark w={136} gap={5} ls={0.14}><Translate />Překladač Google</Bookmark>
          <Bookmark w={154} ls={-0.05}><Funny />Funnyjunk - Funny P...</Bookmark>
          <Bookmark w={73} ls={0.1}><FaTwitter size={16} color="#37a0f0" />Twitter</Bookmark>
          <Bookmark w={75} ls={0.1}><Folder />redditz</Bookmark>
          <Bookmark w={153} ls={-0.05}><SeznamMark />Seznam – Najdu tam...</Bookmark>
          <Bookmark w={180} ls={-0.05}><ChronoMark />Chrono.gg - One ga...</Bookmark>
          <Bookmark w={19}>
            <svg width="9" height="8" viewBox="0 0 9 8" fill="none" stroke="#666" strokeWidth="1.300"><path d="M.7.800L4 4 .7 7.200M4.700.800L8 4 4.700 7.200" /></svg>
          </Bookmark>
          <Bookmark w={100} ls={0.05}><Folder />Jiné záložky</Bookmark>
        </Bookmarks>

        <Page>
          <Column>
            <PlateLogo />
            <SiteNav>
              <NavLink>Front Page</NavLink>
              <NavLink>Contact</NavLink>
              <NavLink>About</NavLink>
            </SiteNav>
            <Title>WELCOME TO KOZNA</Title>
            <Subtitle>OPEN SOURCE BASED APPLICATION FOR LICENCE PLATE RECOGNITION</Subtitle>
            <Lead>Please upload image of a car with visible licence plate for KOZNA to process.</Lead>
            <UploadButton>UPLOAD IMAGE</UploadButton>
          </Column>
          <Footer>KOZNA TEAM, 2017</Footer>
        </Page>
      </Window>

      <Dock>
        <DockIcon running><Finder /></DockIcon>
        <DockIcon><circle r="18.300" fill="#e4e4ea" /><SiriArt r={17} /></DockIcon>
        <DockIcon><Rocket /></DockIcon>
        <DockIcon running><ChromeArt /></DockIcon>
        <DockIcon running><MailArt /></DockIcon>
        <DockIcon><Contacts /></DockIcon>
        <DockIcon><Calendar /></DockIcon>
        <DockIcon><Notes /></DockIcon>
        <DockIcon><JetBrains label="PC" art={PyArt} /></DockIcon>
        <DockIcon><JetBrains label="CL" art={ClArt} /></DockIcon>
        <DockIcon><JetBrains label="IJ" art={IjArt} /></DockIcon>
        <DockIcon><Photos /></DockIcon>
        <DockIcon><Messages /></DockIcon>
        <DockIcon><Music /></DockIcon>
        <DockIcon><AppStore /></DockIcon>
        <DockIcon running><SpotifyArt /></DockIcon>
        <DockIcon running><SteamArt /></DockIcon>
        <DockIcon running><CodeArt /></DockIcon>
        <DockIcon running><WordArt /></DockIcon>
        <DockIcon running><MampArt r={20.5} /></DockIcon>
        <Separator />
        <DockIcon><Docx /></DockIcon>
        <DockIcon><RemoteArt /></DockIcon>
        <DockIcon><SpotifyWin /></DockIcon>
        <DockIcon><CodeWin /></DockIcon>
        <DockIcon><WordWin /></DockIcon>
        <DockIcon><MampWin /></DockIcon>
        <DockIcon><Trash /></DockIcon>
      </Dock>
    </Desktop>
  );
}
